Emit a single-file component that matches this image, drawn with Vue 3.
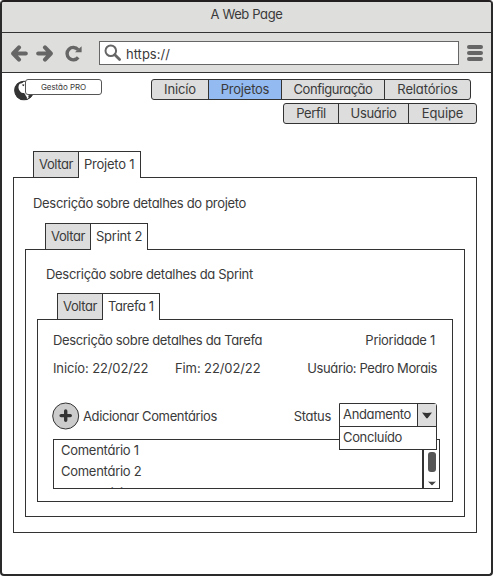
<script setup>
import { ref } from 'vue'

const mainNav = [
  { label: 'Inicío', cls: 'inicio' },
  { label: 'Projetos', cls: 'projetos', active: true },
  { label: 'Configuração', cls: 'config' },
  { label: 'Relatórios', cls: 'relatorios' },
]
const subNav = [
  { label: 'Perfil', cls: 'perfil' },
  { label: 'Usuário', cls: 'usuario' },
  { label: 'Equipe', cls: 'equipe' },
]
const comments = ['Comentário 1', 'Comentário 2', 'Comentário 3']
const statusOpen = ref(true)
</script>

<template>
  <div class="window">
    <div class="titlebar"><span>A Web Page</span></div>
    <div class="toolbar">
      <svg class="arrow back" width="17" height="17" viewBox="0 0 17 17">
        <path d="M8 2.4 L2.2 8.5 L8 14.6 M3 8.5 H14.8" />
      </svg>
      <svg class="arrow forward" width="17" height="17" viewBox="0 0 17 17">
        <path d="M9 2.4 L14.8 8.5 L9 14.6 M14 8.5 H2.2" />
      </svg>
      <svg class="reload" width="17" height="17" viewBox="0 0 17 17">
        <path class="ring" d="M13 4.6 A6.2 6.2 0 1 0 13.2 12.4" />
        <path class="tip" d="M16.6 1.2 V7.2 H10 Z" />
      </svg>
      <div class="url">
        <svg class="search" width="18" height="18" viewBox="0 0 18 18">
          <circle cx="6.8" cy="6.8" r="5.3" />
          <path d="M10.8 10.8 L15.6 15.6" />
        </svg>
        <span>https://</span>
      </div>
      <div class="burger"><i></i><i></i><i></i></div>
    </div>

    <div class="page">
      <header class="header">
        <div class="brand">
          <svg class="globe" width="20" height="21" viewBox="0 0 20 21">
            <circle cx="10" cy="10.5" r="9.3" fill="#fff" stroke="#333" stroke-width="1.1" />
            <path d="M10 1.2 C3.5 1.4 0.5 6 0.7 10.8 C1 17 6 20.4 11.2 19.8 C13.4 19.4 13.6 17.4 12 16 C11.2 14.8 11.4 13.8 10 13 C8.4 12.6 7.4 13.2 6.2 11.4 C4.2 9.4 3.8 6.2 5.6 3.8 C7 3.6 8.8 3 10 1.2 Z M14.6 15.2 L19 14.4 C18 16.4 16.6 17.8 15 18.6 C14.6 17.6 14 16.4 14.6 15.2 Z" fill="#333" />
            <path d="M8.4 4.2 L10.4 4.6 L9.8 6.2 L8.4 5.6 Z" fill="#333" />
          </svg>
          <div class="brand-name">Gestão PRO</div>
        </div>
        <nav class="navs">
          <div class="nav">
            <a v-for="n in mainNav" :key="n.label" :class="[n.cls, { active: n.active }]">{{ n.label }}</a>
          </div>
          <div class="nav sub">
            <a v-for="n in subNav" :key="n.label" :class="n.cls">{{ n.label }}</a>
          </div>
        </nav>
      </header>

      <section class="level project">
        <div class="tabs"><a class="tab">Voltar</a><a class="tab current">Projeto 1</a></div>
        <div class="panel">
          <p class="desc">Descrição sobre detalhes do projeto</p>

          <section class="level sprint">
            <div class="tabs"><a class="tab">Voltar</a><a class="tab current">Sprint 2</a></div>
            <div class="panel">
              <p class="desc">Descrição sobre detalhes da Sprint</p>

              <section class="level task">
                <div class="tabs"><a class="tab">Voltar</a><a class="tab current">Tarefa 1</a></div>
                <div class="panel">
                  <div class="row first">
                    <span class="task-desc">Descrição sobre detalhes da Tarefa</span>
                    <span class="priority">Prioridade 1</span>
                  </div>
                  <div class="row second">
                    <span class="start">Inicío: 22/02/22</span>
                    <span class="end">Fim: 22/02/22</span>
                    <span class="user">Usuário: Pedro Morais</span>
                  </div>
                  <div class="row actions">
                    <button class="add">
                      <svg width="28" height="28" viewBox="0 0 28 28">
                        <circle cx="13.7" cy="14" r="13" fill="#ccc" stroke="#333" />
                        <path d="M13.7 9 V18.2 M9.1 13.6 H18.3" stroke="#333" stroke-width="3.4" stroke-linecap="round" />
                      </svg>
                      <span>Adicionar Comentários</span>
                    </button>
                    <label class="status">Status</label>
                    <div class="select" @click="statusOpen = !statusOpen">
                      <span class="value">Andamento</span>
                      <span class="caret">
                        <svg width="10" height="7" viewBox="0 0 10 7"><path d="M0 0.6 Q5 1.4 10 0.6 L5.8 6 Q5 6.8 4.2 6 Z" /></svg>
                      </span>
                      <div v-if="statusOpen" class="menu">Concluído</div>
                    </div>
                  </div>
                  <div class="comments">
                    <ul>
                      <li v-for="c in comments" :key="c">{{ c }}</li>
                    </ul>
                    <div class="scroll">
                      <i class="thumb"></i>
                      <svg width="8" height="5" viewBox="0 0 8 5"><path d="M0 0.4 Q4 1.2 8 0.4 L4.5 4 Q4 4.4 3.5 4 Z" /></svg>
                    </div>
                  </div>
                </div>
              </section>
            </div>
          </section>
        </div>
      </section>
    </div>
  </div>
</template>

<style>
body { margin: 0; background: #fff; }
</style>

<style scoped>
* { box-sizing: border-box; }
.window {
  width: 493px;
  height: 576px;
  border: 2px solid #2b2a2b;
  border-top-color: #231f20;
  border-radius: 4px;
  background: #fff;
  overflow: hidden;
  color: #3a3a3a;
  font: 13px/20px Inter, "Liberation Sans", sans-serif;
  font-feature-settings: "cv11";
  letter-spacing: -0.34px;
  white-space: nowrap;
}
.titlebar {
  height: 31px;
  padding-top: 2px;
  background: #dededc;
  border-bottom: 1px solid #333;
  text-align: center;
}
.titlebar span { letter-spacing: -0.38px; }
.toolbar {
  height: 40px;
  display: flex;
  align-items: flex-start;
  background: #dededc;
  border-bottom: 1px solid #333;
  padding: 8px 0 0 9px;
}
.arrow { margin-top: 4px; fill: none; stroke: #666; stroke-width: 4.1; stroke-linecap: round; stroke-linejoin: round; }
.forward { margin-left: 8px; }
.reload { margin: 4px 0 0 12px; }
.ring { fill: none; stroke: #666; stroke-width: 3.4; }
.tip { fill: #666; }
.url {
  width: 360px;
  height: 24px;
  margin-left: 17px;
  padding-left: 4px;
  border: 1px solid #666;
  background: #fff;
  display: flex;
  align-items: center;
}
.url span { margin: 1px 0 0 4px; letter-spacing: 0; }
.search { fill: none; stroke: #666; stroke-width: 2; flex: none; margin-top: -1px; }
.search path { stroke-width: 2.8; stroke-linecap: round; }
.burger { display: flex; flex-direction: column; gap: 2px; margin: 4px 0 0 8px; }
.burger i { width: 16px; height: 4px; border-radius: 2px; background: #666; }

.header { display: flex; height: 78px; padding: 6px 0 0 12px; }
.brand { display: flex; width: 137px; }
.globe { flex: none; margin-top: 1px; }
.brand-name {
  width: 77px;
  height: 16px;
  margin-left: -9px;
  border: 1px solid #555;
  border-radius: 3px;
  background: #fff;
  font-size: 8px;
  line-height: 14px;
  letter-spacing: -0.05px;
  text-align: center;
  position: relative;
}
.navs { display: flex; flex-direction: column; gap: 3px; }
.nav {
  display: flex;
  width: 320px;
  height: 21px;
  border: 1px solid #333;
  border-radius: 3px;
  background: #ddd;
  overflow: hidden;
  text-align: center;
  line-height: 18px;
}
.nav a { border-left: 1px solid #333; }
.nav a:first-child { border-left: 0; }
.nav .active { background: #94baf2; }
.nav.sub { width: 194px; margin-left: 132px; }
.inicio { width: 56px; letter-spacing: -0.13px; }
.projetos { width: 73px; letter-spacing: -0.22px; }
.config { width: 103px; letter-spacing: -0.46px; }
.relatorios { width: 86px; letter-spacing: -0.14px; }
.perfil { width: 54px; letter-spacing: -0.4px; }
.usuario { width: 70px; letter-spacing: -0.34px; }
.equipe { width: 68px; letter-spacing: -0.1px; }

.tabs { display: flex; height: 27px; margin: 0 0 -1px 20px; position: relative; }
.tab {
  width: 45px;
  padding-left: 5px;
  border: 1px solid #333;
  border-right: 0;
  background: #ddd;
  line-height: 24px;
  letter-spacing: -0.42px;
}
.tab.current { width: 58px; border: 1px solid #333; border-bottom: 0; background: #fff; letter-spacing: -0.24px; }
.project > .tabs .current { width: 63px; }
.task > .tabs .current { letter-spacing: -0.4px; }
.panel { border: 1px solid #333; }
.project { margin: 0 14px 0 11px; }
.project > .panel { height: 356px; }
.sprint { margin: 0 11px; }
.sprint > .panel { height: 268px; }
.task { margin: 0 11px; }
.task > .panel { height: 183px; padding: 11px 12px 0 15px; }
.desc { margin: 0; height: 45px; padding: 15px 0 0 19px; letter-spacing: -0.31px; }
.sprint .desc { height: 43px; padding: 14px 0 0 20px; }

.row { display: flex; align-items: flex-start; }
.first { height: 28px; justify-content: space-between; padding-right: 5px; line-height: 19px; }
.task-desc { letter-spacing: -0.35px; }
.priority { letter-spacing: -0.28px; }
.second { height: 43px; padding-right: 3px; line-height: 19px; }
.start { letter-spacing: -0.12px; width: 122px; }
.end { letter-spacing: -0.1px; }
.user { margin-left: auto; letter-spacing: -0.38px; }
.actions { height: 37px; }
.add {
  display: flex;
  align-items: center;
  gap: 3px;
  margin-left: -1px;
  padding: 0;
  border: 0;
  background: none;
  font: inherit;
  font-feature-settings: inherit;
  color: inherit;
  letter-spacing: -0.36px;
}
.add svg { fill: none; }
.add span { line-height: 28px; }
.status { margin: 4px 0 0 auto; }
.select {
  width: 98px;
  height: 24px;
  margin: 1px 3px 0 8px;
  border: 1px solid #333;
  border-radius: 0 3px 0 0;
  background: #fff;
  display: flex;
  position: relative;
}
.value { flex: 1; padding-left: 3px; line-height: 21px; }
.caret {
  width: 19px;
  border-left: 1px solid #333;
  background: #ddd;
  display: flex;
  align-items: center;
  justify-content: center;
}
.caret path { fill: #333; }
.scroll path { fill: #444; }
.menu {
  position: absolute;
  left: -1px;
  top: 22px;
  width: 98px;
  height: 24px;
  padding-left: 3px;
  border: 1px solid #333;
  background: #fff;
  line-height: 20px;
  z-index: 2;
}
.comments { display: flex; height: 50px; width: 387px; border: 1px solid #333; overflow: hidden; }
.comments ul { flex: 1; margin: 0; padding: 0 0 0 7px; list-style: none; height: 48px; overflow: hidden; }
.comments li { line-height: 21px; letter-spacing: -0.27px; }
.comments li:last-child { padding-top: 1px; }
.scroll {
  width: 17px;
  border-left: 2px solid #333;
  display: flex;
  flex-direction: column;
  align-items: center;
  padding-top: 12px;
}
.thumb { width: 8px; height: 20px; border-radius: 3px; background: #555; }
.scroll svg { margin-top: 9px; }
</style>
